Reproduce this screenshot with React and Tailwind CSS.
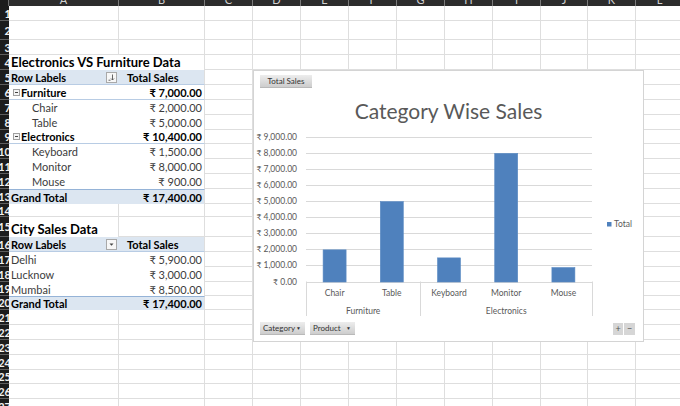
import React from 'react';

const COLS = [
  { k: 'A', w: 'w-[110px]' },
  { k: 'B', w: 'w-[86px]' },
  { k: 'C', w: 'w-[48px]' },
  { k: 'D', w: 'w-[48px]' },
  { k: 'E', w: 'w-[48px]' },
  { k: 'F', w: 'w-[48px]' },
  { k: 'G', w: 'w-[48px]' },
  { k: 'H', w: 'w-[48px]' },
  { k: 'I', w: 'w-[48px]' },
  { k: 'J', w: 'w-[47px]' },
  { k: 'K', w: 'w-[48px]' },
  { k: 'L', w: 'w-[48px]' },
];

const ROWS = [
  { n: 1, h: 'h-[15px]' },
  { n: 2, h: 'h-[19px]' },
  { n: 3, h: 'h-[15px]' },
  { n: 4, h: 'h-[15px]', kind: 'title', text: 'Electronics VS Furniture Data' },
  { n: 5, h: 'h-[15px]', kind: 'head', icon: 'sort' },
  { n: 6, h: 'h-[15px]', kind: 'group', label: 'Furniture', value: '₹ 7,000.00' },
  { n: 7, h: 'h-[15px]', kind: 'item', label: 'Chair', value: '₹ 2,000.00', indent: true },
  { n: 8, h: 'h-[15px]', kind: 'item', label: 'Table', value: '₹ 5,000.00', indent: true },
  { n: 9, h: 'h-[14px]', kind: 'group', label: 'Electronics', value: '₹ 10,400.00' },
  { n: 10, h: 'h-[15px]', kind: 'item', label: 'Keyboard', value: '₹ 1,500.00', indent: true },
  { n: 11, h: 'h-[15px]', kind: 'item', label: 'Monitor', value: '₹ 8,000.00', indent: true },
  { n: 12, h: 'h-[15px]', kind: 'item', label: 'Mouse', value: '₹ 900.00', indent: true },
  { n: 13, h: 'h-[15px]', kind: 'total', value: '₹ 17,400.00' },
  { n: 14, h: 'h-[13px]' },
  { n: 15, h: 'h-[20px]', kind: 'title2', text: 'City Sales Data' },
  { n: 16, h: 'h-[15px]', kind: 'head', icon: 'drop' },
  { n: 17, h: 'h-[15px]', kind: 'item', label: 'Delhi', value: '₹ 5,900.00' },
  { n: 18, h: 'h-[15px]', kind: 'item', label: 'Lucknow', value: '₹ 3,000.00' },
  { n: 19, h: 'h-[14px]', kind: 'item', label: 'Mumbai', value: '₹ 8,500.00' },
  { n: 20, h: 'h-[14px]', kind: 'total', value: '₹ 17,400.00' },
  { n: 21, h: 'h-[15px]' },
  { n: 22, h: 'h-[15px]' },
  { n: 23, h: 'h-[15px]' },
  { n: 24, h: 'h-[15px]' },
  { n: 25, h: 'h-[14px]' },
  { n: 26, h: 'h-[15px]' },
  { n: 27, h: 'h-[15px]' },
];

const SALES = [
  { name: 'Chair', v: 2000 },
  { name: 'Table', v: 5000 },
  { name: 'Keyboard', v: 1500 },
  { name: 'Monitor', v: 8000 },
  { name: 'Mouse', v: 900 },
];

const FilterBtn = ({ icon }) => (
  <div className="w-[11px] h-[11px] bg-[#f7f7f7] border border-[#a9a9a9] flex items-center justify-center">
    {icon === 'sort' ? (
      <svg width="7" height="7" viewBox="0 0 7 7">
        <path d="M4.5 0.5v5.5M3 4.5l1.5 1.5 1.5-1.5M0.5 6.2h2" stroke="#555" strokeWidth="0.9" fill="none" />
      </svg>
    ) : (
      <svg width="7" height="7" viewBox="0 0 7 7">
        <path d="M1.5 2.5h4l-2 2.2z" fill="#444" />
      </svg>
    )}
  </div>
);

const Collapse = () => (
  <div className="w-[7px] h-[7px] border border-[#a0a0a0] bg-[#f4f4f4] flex items-center justify-center mr-px">
    <div className="w-[3px] h-px bg-[#444]" />
  </div>
);

const TableCell = ({ row }) => {
  const line = 'border-r border-[#dedede]';
  if (row.kind === 'title') {
    return (
      <div className={`w-[196px] ${line} flex items-end pl-[2px] text-[13px] font-bold leading-[15px] text-black whitespace-nowrap`}>
        {row.text}
      </div>
    );
  }
  if (row.kind === 'title2') {
    return (
      <>
        <div className={`w-[110px] ${line} flex items-end pl-[2px] text-[13px] font-bold leading-[16px] text-black whitespace-nowrap`}>
          {row.text}
        </div>
        <div className={`w-[86px] ${line} border-b border-b-[#dedede]`} />
      </>
    );
  }
  if (row.kind === 'head') {
    return (
      <div className={`w-[196px] ${line} flex bg-[#dce6f1] border-b border-b-[#b8cce4] font-bold text-black`}>
        <div className="w-[110px] flex items-center justify-between pl-[2px] pr-[2px]">
          <span>Row Labels</span>
          <FilterBtn icon={row.icon} />
        </div>
        <div className="flex-1 flex items-center pl-[8px]">Total Sales</div>
      </div>
    );
  }
  if (row.kind === 'group') {
    return (
      <div className={`w-[196px] ${line} flex border-b border-b-[#b8cce4] font-bold text-black`}>
        <div className="w-[110px] flex items-center pl-[4px]">
          <Collapse />
          <span>{row.label}</span>
        </div>
        <div className="flex-1 flex items-center justify-end pr-[2px]">{row.value}</div>
      </div>
    );
  }
  if (row.kind === 'item') {
    return (
      <div className={`w-[196px] ${line} flex text-[#3c3c3c]`}>
        <div className={`w-[110px] flex items-center ${row.indent ? 'pl-[23px]' : 'pl-[2px]'}`}>{row.label}</div>
        <div className="flex-1 flex items-center justify-end pr-[2px]">{row.value}</div>
      </div>
    );
  }
  if (row.kind === 'total') {
    return (
      <div className={`w-[196px] ${line} flex bg-[#dce6f1] border-t border-t-[#95b3d7] font-bold text-black`}>
        <div className="w-[110px] flex items-center pl-[2px]">Grand Total</div>
        <div className="flex-1 flex items-center justify-end pr-[2px]">{row.value}</div>
      </div>
    );
  }
  return (
    <>
      <div className="w-[110px] border-r border-b border-[#dedede]" />
      <div className="w-[86px] border-r border-b border-[#dedede]" />
    </>
  );
};

const FieldBtn = ({ children, arrow, className = '' }) => (
  <div
    className={`h-[13px] flex items-center bg-linear-to-b from-[#ededed] to-[#cdcdcd] border-b border-[#b9b9b9] text-[8px] text-[#333] ${
      arrow ? 'justify-between pl-[3px] pr-[4px]' : 'justify-center'
    } ${className}`}
  >
    <span>{children}</span>
    {arrow && <span className="text-[5px] text-[#333]">▼</span>}
  </div>
);

const Chart = () => {
  const y0 = 154.5;
  const step = 16.08;
  const left = 52;
  const right = 338;
  const cw = (right - left) / 5;
  const bw = 23;
  const ticks = [0, 1, 2, 3, 4, 5, 6, 7, 8, 9];

  return (
    <div className="absolute left-[253px] top-[70px] w-[391px] h-[272px] bg-white border border-[#d4d4d4] flex flex-col">
      <div className="pl-[6px] pt-[4px]">
        <FieldBtn className="w-[52px]">Total Sales</FieldBtn>
      </div>
      <div className="mt-[10px] text-center text-[21px] leading-[26px] text-[#595959]">Category Wise Sales</div>
      <svg width="389" height="190" className="mt-[3px] block" fontFamily="Lato, 'Liberation Sans', sans-serif">
        {ticks.map((k) => {
          const y = Math.round(y0 - k * step) + 0.5;
          return (
            <g key={k}>
              <line x1={left} x2={right} y1={y} y2={y} stroke="#d9d9d9" strokeWidth="1" />
              <text x="43" y={y} fontSize="8.5" fill="#595959" textAnchor="end" dominantBaseline="middle">
                {`₹ ${k === 0 ? '0.00' : `${k},000.00`}`}
              </text>
            </g>
          );
        })}
        {SALES.map((d, i) => {
          const h = (d.v / 1000) * step;
          const x = left + i * cw + (cw - bw) / 2;
          return (
            <g key={d.name}>
              <rect x={x} y={y0 + 0.5 - h} width={bw} height={h} fill="#4f81bd" stroke="#5a8ac4" strokeWidth="0.6" />
              <text x={left + i * cw + cw / 2} y="167" fontSize="8.5" fill="#595959" textAnchor="middle" dominantBaseline="middle">
                {d.name}
              </text>
            </g>
          );
        })}
        {[left, left + 2 * cw, right].map((x) => (
          <line key={x} x1={Math.round(x) + 0.5} x2={Math.round(x) + 0.5} y1={y0} y2="189" stroke="#d9d9d9" strokeWidth="1" />
        ))}
        <text x={left + cw} y="185" fontSize="8.5" fill="#595959" textAnchor="middle" dominantBaseline="middle">
          Furniture
        </text>
        <text x={left + 3.5 * cw} y="185" fontSize="8.5" fill="#595959" textAnchor="middle" dominantBaseline="middle">
          Electronics
        </text>
        <rect x="353" y="95" width="4.5" height="4.5" fill="#4f81bd" />
        <text x="360" y="97.5" fontSize="8.5" fill="#595959" dominantBaseline="middle">
          Total
        </text>
      </svg>
      <div className="mt-[5px] flex items-center justify-between pl-[6px] pr-[8px]">
        <div className="flex gap-[5px]">
          <FieldBtn arrow className="w-[45px]">Category</FieldBtn>
          <FieldBtn arrow className="w-[45px]">Product</FieldBtn>
        </div>
        <div className="flex gap-px">
          <div className="w-[10px] h-[12px] bg-[#d6d6d6] flex items-center justify-center text-[9px] text-[#555] leading-none">+</div>
          <div className="w-[11px] h-[12px] bg-[#d6d6d6] flex items-center justify-center text-[9px] text-[#555] leading-none">−</div>
        </div>
      </div>
    </div>
  );
};

export default function App() {
  return (
    <div className="relative w-[680px] h-[406px] overflow-hidden bg-white font-['Lato','Liberation_Sans',sans-serif] text-[11px] leading-[13px]">
      {/* column headers */}
      <div className="flex h-[6px] w-[684px]">
        <div className="w-[9px] bg-[#1c1c1c] border-r border-[#6a6a6a]" />
        {COLS.map((c) => (
          <div key={c.k} className={`${c.w} bg-[#2c2c2c] border-r border-[#7a7a7a] overflow-hidden flex justify-center`}>
            <span className="text-[11px] leading-[11px] -mt-[6px] text-[#d2d2d2]">{c.k}</span>
          </div>
        ))}
      </div>

      {/* rows */}
      {ROWS.map((row) => (
        <div key={row.n} className={`flex ${row.h} w-[684px]`}>
          <div className="w-[9px] bg-[#1c1c1c] border-b border-[#5e5e5e] overflow-hidden flex justify-end items-center">
            <span className="text-[11px] font-bold leading-none text-[#f0f0f0] whitespace-nowrap -mr-[2px]">{row.n}</span>
          </div>
          <TableCell row={row} />
          {COLS.slice(2).map((c) => (
            <div key={c.k} className={`${c.w} border-r border-b border-[#dedede]`} />
          ))}
        </div>
      ))}

      <Chart />
    </div>
  );
}
